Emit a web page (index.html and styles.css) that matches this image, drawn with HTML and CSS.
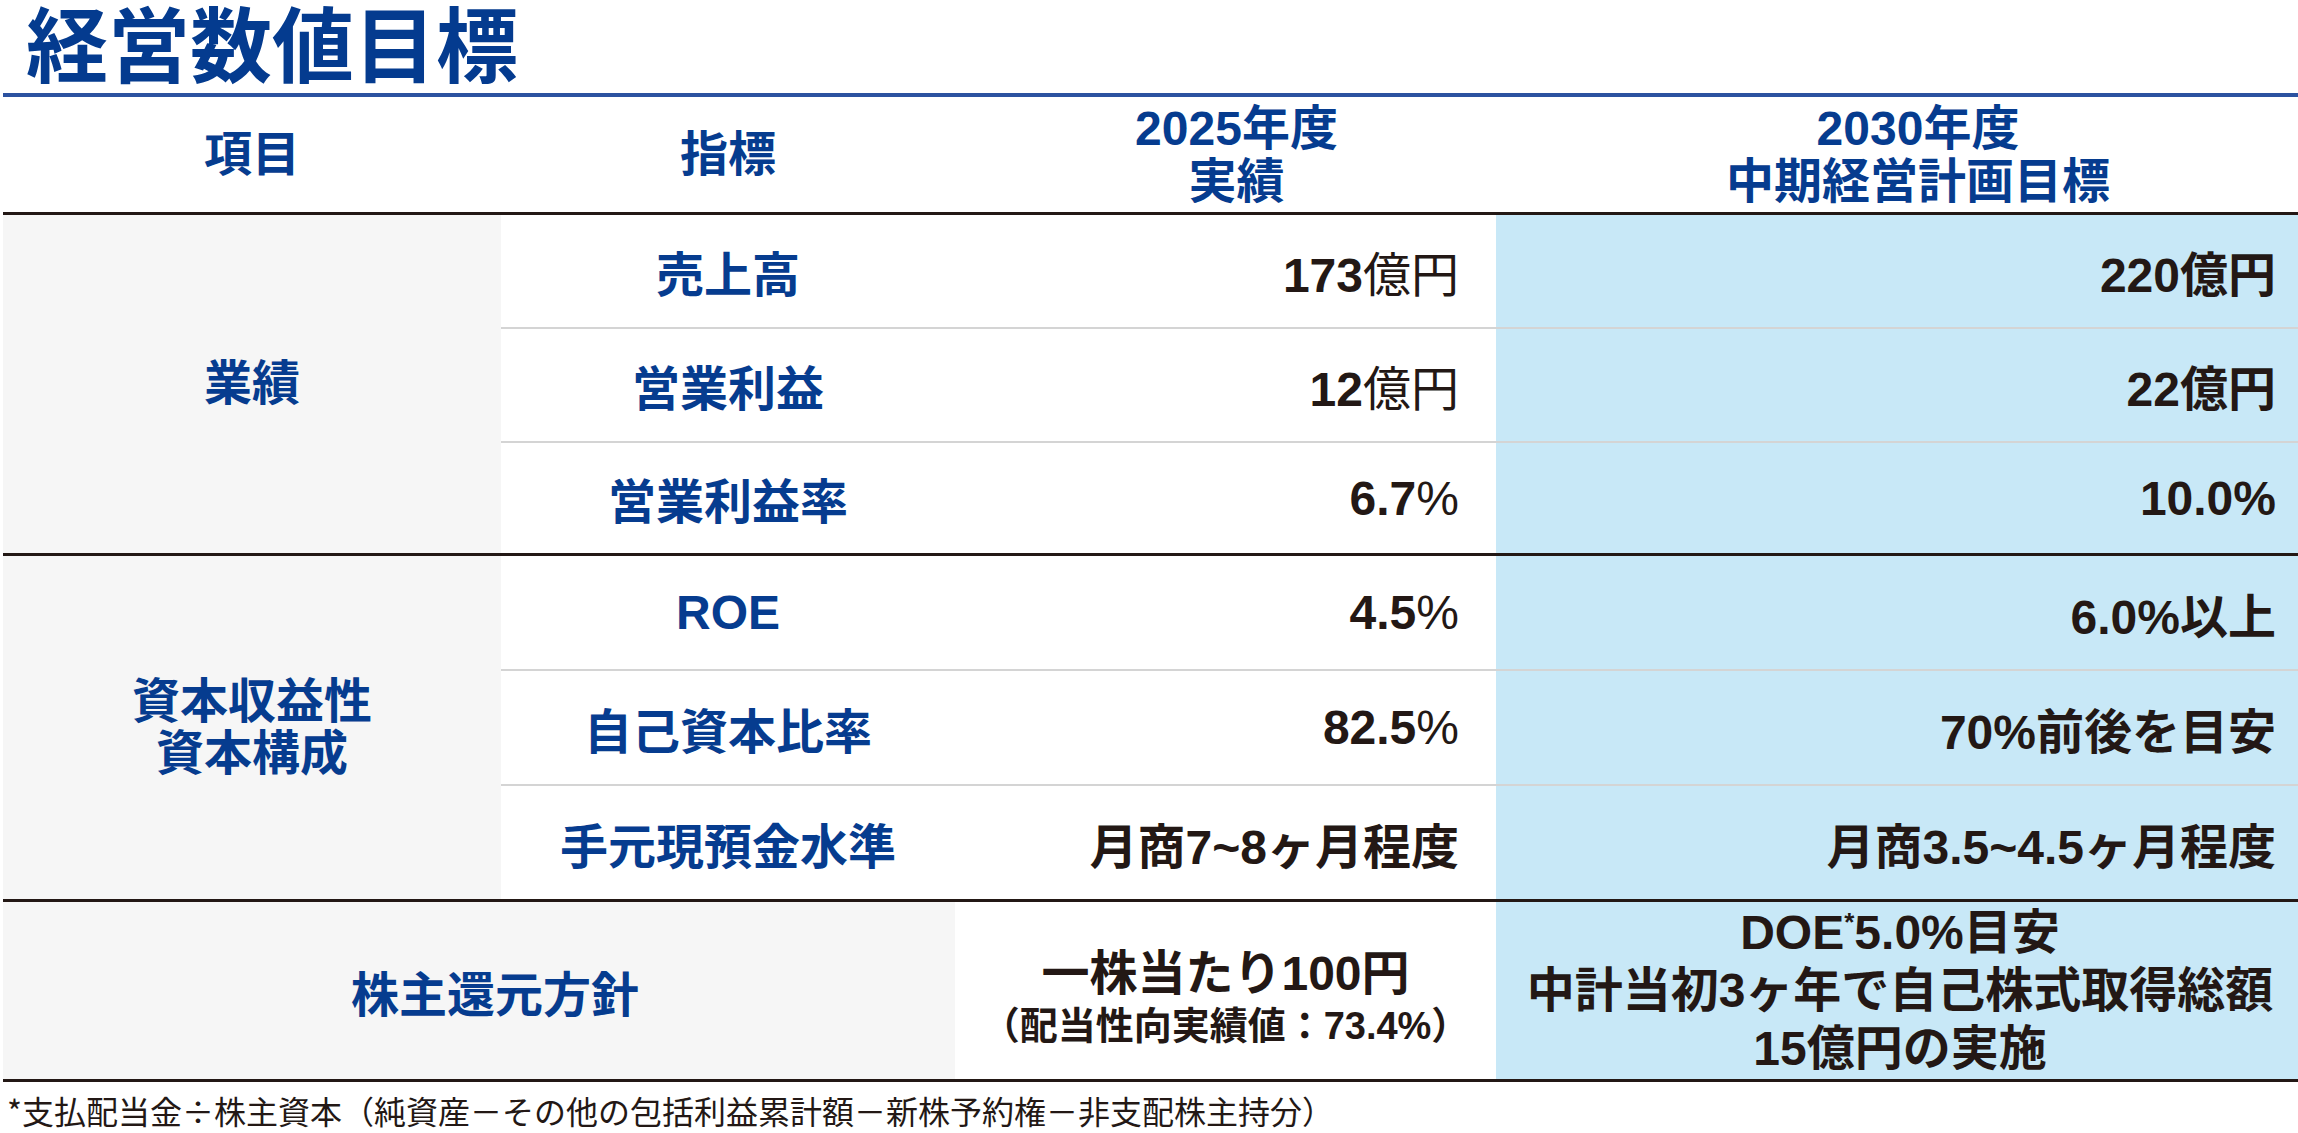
FILE: index.html
```html
<!DOCTYPE html>
<html lang="ja">
<head>
<meta charset="utf-8">
<title>経営数値目標</title>
<link rel="stylesheet" href="styles.css">
</head>
<body>
<div class="page">
  <h1 class="title">経営数値目標</h1>
  <div class="table">
    <div class="cell head hc1">項目</div>
    <div class="cell head hc2">指標</div>
    <div class="cell head hc3"><div>2025年度<br>実績</div></div>
    <div class="cell head hc4"><div>2030年度<br>中期経営計画目標</div></div>

    <div class="cell group"><div>業績</div></div>
    <div class="cell ind sep">売上高</div>
    <div class="cell val sep"><span>173<span class="unit">億円</span></span></div>
    <div class="cell tgt sep">220億円</div>
    <div class="cell ind sep">営業利益</div>
    <div class="cell val sep"><span>12<span class="unit">億円</span></span></div>
    <div class="cell tgt sep">22億円</div>
    <div class="cell ind end">営業利益率</div>
    <div class="cell val end"><span>6.7<span class="unit">%</span></span></div>
    <div class="cell tgt end">10.0%</div>

    <div class="cell group"><div>資本収益性<br>資本構成</div></div>
    <div class="cell ind sep">ROE</div>
    <div class="cell val sep"><span>4.5<span class="unit">%</span></span></div>
    <div class="cell tgt sep">6.0%以上</div>
    <div class="cell ind sep">自己資本比率</div>
    <div class="cell val sep"><span>82.5<span class="unit">%</span></span></div>
    <div class="cell tgt sep">70%前後を目安</div>
    <div class="cell ind end">手元現預金水準</div>
    <div class="cell val end">月商7~8ヶ月程度</div>
    <div class="cell tgt end">月商3.5~4.5ヶ月程度</div>

    <div class="cell share">株主還元方針</div>
    <div class="cell payout">
      <div class="payout-main">一株当たり100円</div>
      <div class="payout-sub">（配当性向実績値：73.4%）</div>
    </div>
    <div class="cell policy"><div class="policy-text">DOE<sup class="ast">*</sup>5.0%目安<br>中計当初3ヶ年で自己株式取得総額<br>15億円の実施</div></div>
  </div>
  <p class="note">*支払配当金÷株主資本（純資産－その他の包括利益累計額－新株予約権－非支配株主持分）</p>
</div>
</body>
</html>
```

FILE: styles.css
```css
html, body {
  margin: 0;
  padding: 0;
  background: #ffffff;
}

body {
  font-family: "Liberation Sans", "Noto Sans CJK JP", sans-serif;
  color: #231815;
}

.page {
  width: 2298px;
  padding-left: 3px;
  box-sizing: border-box;
}

.title {
  margin: 0 0 11px 0;
  padding-left: 23px;
  height: 82px;
  font-size: 82px;
  line-height: 82px;
  font-weight: 700;
  color: #043b8f;
  font-family: "Noto Sans CJK JP", sans-serif;
  letter-spacing: 0;
}

.table {
  display: grid;
  grid-template-columns: 498px 454px 541px 802px;
  grid-template-rows: 118px 114px 114px 113px 115px 115px 116px 180px;
  border-top: 4px solid #2c52a0;
}

.cell {
  box-sizing: border-box;
  display: flex;
  align-items: center;
  font-weight: 700;
  font-size: 48px;
  white-space: nowrap;
}

.head {
  justify-content: center;
  text-align: center;
  color: #063c8f;
  line-height: 53px;
  border-bottom: 3px solid #231815;
}

.hc3 {
  padding-left: 22px;
}

.hc4 {
  padding-left: 42px;
}

.group {
  grid-column: 1;
  grid-row: span 3;
  background: #f6f6f6;
  color: #063c8f;
  justify-content: center;
  text-align: center;
  line-height: 52px;
  border-bottom: 3px solid #231815;
}

.ind {
  justify-content: center;
  color: #063c8f;
}

.val {
  justify-content: flex-end;
  padding-right: 37px;
  color: #231815;
}

.tgt {
  justify-content: flex-end;
  padding-right: 22px;
  background: #c8e8f7;
  color: #231815;
}

.unit {
  font-weight: 400;
}

.sep {
  border-bottom: 2px solid #d4d4d4;
}

.end {
  border-bottom: 3px solid #231815;
}

.share {
  grid-column: span 2;
  background: #f6f6f6;
  color: #063c8f;
  justify-content: center;
  padding-left: 32px;
  border-bottom: 3px solid #231815;
}

.payout {
  flex-direction: column;
  justify-content: center;
  align-items: center;
  padding-top: 14px;
  border-bottom: 3px solid #231815;
  color: #231815;
}

.payout-main {
  font-size: 48px;
  line-height: 56px;
}

.payout-sub {
  font-size: 38px;
  line-height: 48px;
}

.policy {
  justify-content: center;
  background: #c8e8f7;
  border-bottom: 3px solid #231815;
  color: #231815;
  padding-left: 6px;
}

.policy-text {
  text-align: center;
  line-height: 58px;
}

.ast {
  font-size: 26px;
  line-height: 0;
  vertical-align: 18px;
}

.note {
  margin: 8px 0 0 0;
  padding-left: 4px;
  font-size: 32px;
  line-height: 40px;
  font-weight: 400;
  color: #231815;
  font-family: "Noto Sans CJK JP", sans-serif;
}
```
